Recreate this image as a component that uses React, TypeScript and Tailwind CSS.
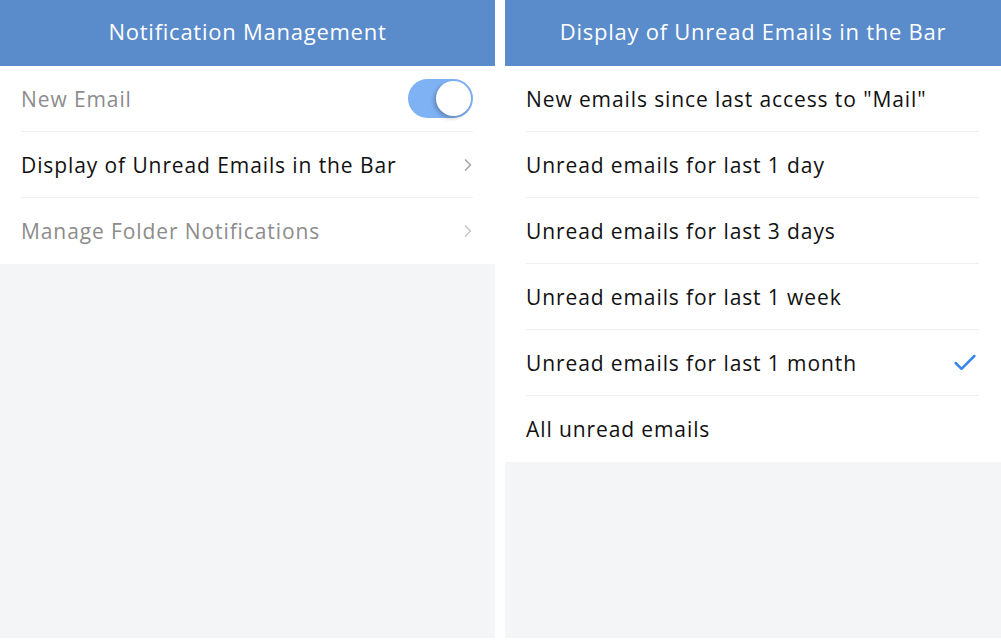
import { Check, ChevronRight } from 'lucide-react';

const font = { fontFamily: '"Open Sans", "Liberation Sans", Arial, sans-serif' };

function Header({ title }: { title: string }) {
  return (
    <div className="h-[66px] pb-[3px] bg-[#5a8bcb] flex items-center justify-center text-white text-[22px] tracking-[0.75px]">
      {title}
    </div>
  );
}

function Row({
  label,
  muted,
  last,
  right,
}: {
  label: string;
  muted?: boolean;
  last?: boolean;
  right?: React.ReactNode;
}) {
  return (
    <div className="pl-[21px] pr-[22px] bg-white">
      <div
        className={
          'h-[66px] flex items-center justify-between ' +
          (last ? '' : 'border-b border-[#f0f0f0]')
        }
      >
        <span className={'text-[21px] tracking-[0.9px] pt-[2px] ' + (muted ? 'text-[#8c8c8c]' : 'text-[#111]')}>
          {label}
        </span>
        {right}
      </div>
    </div>
  );
}

const options = [
  'New emails since last access to "Mail"',
  'Unread emails for last 1 day',
  'Unread emails for last 3 days',
  'Unread emails for last 1 week',
  'Unread emails for last 1 month',
  'All unread emails',
];

export default function App() {
  return (
    <div className="w-[1001px] h-[640px] bg-white flex gap-[10px] pb-[2px]" style={font}>
      <div className="w-[495px] flex flex-col bg-[#f4f5f7]">
        <Header title="Notification Management" />
        <Row
          label="New Email"
          muted
          right={
            <div className="w-[65px] h-[39px] rounded-full bg-[#7fb2f5] relative">
              <div className="absolute right-[2px] top-[2px] w-[35px] h-[35px] rounded-full bg-white shadow-[-2px_2px_4px_rgba(0,0,0,0.25)]" />
            </div>
          }
        />
        <Row
          label="Display of Unread Emails in the Bar"
          right={<ChevronRight className="w-[20px] h-[20px] text-[#a8a8a8] mr-[-5px]" strokeWidth={2} />}
        />
        <Row
          label="Manage Folder Notifications"
          muted
          last
          right={<ChevronRight className="w-[20px] h-[20px] text-[#c8c8c8] mr-[-5px]" strokeWidth={2} />}
        />
      </div>
      <div className="w-[496px] flex flex-col bg-[#f4f5f7]">
        <Header title="Display of Unread Emails in the Bar" />
        {options.map((o, i) => (
          <Row
            key={o}
            label={o}
            last={i === options.length - 1}
            right={i === 4 ? <Check className="w-[28px] h-[28px] text-[#3a86f0]" strokeWidth={2.2} /> : null}
          />
        ))}
      </div>
    </div>
  );
}
